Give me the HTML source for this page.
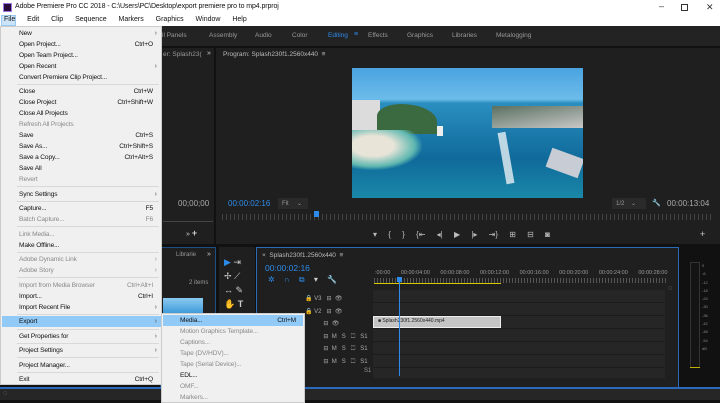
<!DOCTYPE html>
<html><head><meta charset="utf-8"><style>
*{margin:0;padding:0;box-sizing:border-box}
body{width:720px;height:400px;overflow:hidden;background:#111;font-family:"Liberation Sans",sans-serif;position:relative}
.a{position:absolute}
.t{position:absolute;white-space:nowrap;font-size:7px;color:#999}
.m{position:absolute;left:18px;font-size:6.6px;letter-spacing:-0.15px;color:#111;white-space:nowrap;line-height:9px}
.m.g{color:#8a8a8a}
.k{position:absolute;font-size:6.6px;letter-spacing:-0.15px;color:#111;white-space:nowrap;right:8px;line-height:9px}
.k.g{color:#8a8a8a}
.ar{position:absolute;right:4px;font-size:7px;color:#555;line-height:9px}
.sep{position:absolute;left:16px;right:2px;height:1px;background:#d8d8d8}
.blue{color:#2d8ceb}
</style></head><body>
<!-- title bar -->
<div class="a" style="left:0;top:0;width:720px;height:26px;background:#fff"></div>
<div class="a" style="left:3px;top:3px;width:9px;height:9px;background:#2a0a3a;border:1px solid #9a7ae0"></div>
<div class="t" style="left:15px;top:3px;color:#111;font-size:7px;letter-spacing:-0.1px">Adobe Premiere Pro CC 2018 - C:\Users\PC\Desktop\export premiere pro to mp4.prproj</div>
<div class="t" style="left:659px;top:1px;color:#333;font-size:9px">–</div>
<div class="a" style="left:681px;top:4px;width:7px;height:7px;border:1px solid #333"></div>
<div class="t" style="left:706px;top:2px;color:#333;font-size:9px">✕</div>
<div class="a" style="left:1px;top:15px;width:15px;height:11px;background:#cce4f7;border:1px solid #99c9ef"></div>
<div class="t" style="left:4px;top:16px;color:#111;font-size:7px;word-spacing:4px">File&nbsp; Edit&nbsp; Clip&nbsp; Sequence&nbsp; Markers&nbsp; Graphics&nbsp; Window&nbsp; Help</div>
<!-- workspace bar -->
<div class="a" style="left:0;top:26px;width:720px;height:20px;background:#232323"></div>
<div class="t" style="left:162px;top:32px;font-size:6.5px">ll Panels</div>
<div class="t" style="left:209px;top:32px;font-size:6.5px">Assembly</div>
<div class="t" style="left:255px;top:32px;font-size:6.5px">Audio</div>
<div class="t" style="left:292px;top:32px;font-size:6.5px">Color</div>
<div class="t blue" style="left:328px;top:32px;font-size:6.5px">Editing</div>
<div class="t" style="left:354px;top:31px;color:#2d8ceb">≡</div>
<div class="t" style="left:368px;top:32px;font-size:6.5px">Effects</div>
<div class="t" style="left:407px;top:32px;font-size:6.5px">Graphics</div>
<div class="t" style="left:452px;top:32px;font-size:6.5px">Libraries</div>
<div class="t" style="left:496px;top:32px;font-size:6.5px">Metalogging</div>
<!-- source panel -->
<div class="a" style="left:160px;top:48px;width:54px;height:196px;background:#1f1f1f"></div>
<div class="t" style="left:163px;top:51px;font-size:6.5px">er: Splash23(</div>
<div class="t" style="left:207px;top:50px;color:#ccc">»</div>
<div class="t" style="left:178px;top:199px;color:#aaa;font-size:8px">00;00;00</div>
<div class="a" style="left:163px;top:221px;width:50px;height:1px;background:#444"></div>
<div class="t" style="left:186px;top:228px;color:#ccc">» <b style="font-size:9px">+</b></div>
<!-- program panel -->
<div class="a" style="left:216px;top:48px;width:504px;height:196px;background:#1f1f1f"></div>
<div class="t" style="left:223px;top:51px;color:#bbb;font-size:6.5px">Program: Splash230f1.2560x440 &nbsp;≡</div>
<div class="a" style="left:352px;top:68px;width:231px;height:130px;overflow:hidden;background:linear-gradient(180deg,#4aa3e0 0%,#6cbcea 24%,#2a8fc0 27%,#1f7fb0 45%,#0f6a9a 70%,#1a88a8 100%)">
<div class="a" style="left:0;top:32px;width:28px;height:34px;background:#dcdcdc"></div>
<div class="a" style="left:25px;top:36px;width:60px;height:30px;background:#3c6a40;border-radius:40% 60% 0 0"></div>
<div class="a" style="left:0;top:62px;width:70px;height:40px;background:radial-gradient(ellipse at 30% 40%,#e8e4d8 30%,#5fb8b0 60%,transparent 72%)"></div>
<div class="a" style="left:140px;top:38px;width:91px;height:22px;background:linear-gradient(170deg,#5a7060,#c8c8c8)"></div>
<div class="a" style="left:196px;top:85px;width:34px;height:20px;background:#c8ccd4;transform:rotate(20deg)"></div>
<div class="a" style="left:150px;top:64px;width:8px;height:52px;background:#e8f0f4;transform:rotate(-10deg);opacity:.8"></div>
<div class="a" style="left:85px;top:58px;width:6px;height:10px;background:#eee"></div>
</div>
<div class="t blue" style="left:228px;top:199px;font-size:8px">00:00:02:16</div>
<div class="a" style="left:278px;top:198px;width:30px;height:11px;background:#2a2a2a"></div>
<div class="t" style="left:282px;top:200px;font-size:6px">Fit &nbsp; &nbsp; ⌄</div>
<div class="a" style="left:612px;top:198px;width:34px;height:11px;background:#2a2a2a"></div>
<div class="t" style="left:616px;top:200px;font-size:6px">1/2 &nbsp; &nbsp;⌄</div>
<div class="t" style="left:652px;top:199px;color:#ccc">🔧</div>
<div class="t" style="left:667px;top:199px;color:#aaa;font-size:8px">00:00:13:04</div>
<div class="a" style="left:222px;top:214px;width:492px;height:6px;background:repeating-linear-gradient(90deg,#444 0 1px,transparent 1px 4px)"></div>
<div class="a" style="left:314px;top:211px;width:5px;height:6px;background:#2d8ceb"></div>
<div class="t" style="left:373px;top:230px;color:#bbb;font-size:8px;word-spacing:9px">▾ { } {⇤ ◂| ▶ |▸ ⇥} ⊞ ⊟ ◙</div>
<div class="t" style="left:700px;top:229px;color:#ccc;font-size:9px">+</div>
<!-- project panel -->
<div class="a" style="left:160px;top:247px;width:56px;height:140px;background:#1f1f1f;border:1px solid #1f4f80"></div>
<div class="t" style="left:176px;top:252px;font-size:6px">Librarie</div>
<div class="t" style="left:207px;top:251px;color:#ccc">»</div>
<div class="t" style="left:189px;top:280px;font-size:6px">2 items</div>
<div class="a" style="left:163px;top:298px;width:40px;height:16px;background:linear-gradient(#8ccaf0,#3a98d8)"></div>
<!-- tools -->
<div class="a" style="left:219px;top:247px;width:36px;height:140px;background:#1f1f1f"></div>
<div class="t" style="left:224px;top:255px;color:#ccc;font-size:9px;line-height:14px;width:28px;white-space:normal"><span class="blue">▶</span> ⇥<br>✢ ⟋<br>↔ ✎<br>✋ <b>T</b></div>
<!-- timeline -->
<div class="a" style="left:256px;top:247px;width:423px;height:141px;background:#1f1f1f;border:1px solid #2a6ab8"></div>
<div class="t" style="left:262px;top:252px;color:#bbb;font-size:6.5px">× &nbsp;Splash230f1.2560x440 &nbsp;≡</div>
<div class="t blue" style="left:265px;top:263px;font-size:8.5px">00:00:02:16</div>
<div class="t" style="left:268px;top:275px;color:#2d8ceb;font-size:8px;word-spacing:7px">✲ ∩ ⧉ <span style="color:#ccc">▾ 🔧</span></div>
<div class="t" style="left:375px;top:270px;font-size:5.5px;word-spacing:9px">:00:00 00:00:04:00 00:00:08:00 00:00:12:00 00:00:16:00 00:00:20:00 00:00:24:00 00:00:28:00</div>
<div class="a" style="left:374px;top:278px;width:292px;height:5px;background:repeating-linear-gradient(90deg,#555 0 1px,transparent 1px 3px)"></div>
<div class="a" style="left:374px;top:283px;width:127px;height:1px;background:#d8c800"></div>
<div class="a" style="left:373px;top:290px;width:292px;height:88px;background:repeating-linear-gradient(180deg,#262626 0 12px,#1c1c1c 12px 13px)"></div>
<div class="a" style="left:373px;top:316px;width:128px;height:12px;background:#c4c4c4;border:1px solid #eee"></div>
<div class="t" style="left:378px;top:318px;color:#222;font-size:5px">■ Splash230f1.2560x440.mp4</div>
<div class="a" style="left:397px;top:277px;width:5px;height:5px;background:#2d8ceb"></div>
<div class="a" style="left:399px;top:282px;width:1px;height:94px;background:#2d8ceb"></div>
<div class="t" style="left:305px;top:293px;color:#aaa;font-size:6px;line-height:12.5px">🔒 V3 &nbsp; ⊟ &nbsp;👁<br>🔒 V2 &nbsp; ⊟ &nbsp;👁<br>&nbsp; &nbsp; &nbsp; &nbsp; &nbsp; &nbsp;⊟ &nbsp;👁<br>&nbsp; &nbsp; &nbsp; &nbsp; &nbsp; &nbsp;⊟ &nbsp;M &nbsp; S &nbsp; ⏍ &nbsp; S1<br>&nbsp; &nbsp; &nbsp; &nbsp; &nbsp; &nbsp;⊟ &nbsp;M &nbsp; S &nbsp; ⏍ &nbsp; S1<br>&nbsp; &nbsp; &nbsp; &nbsp; &nbsp; &nbsp;⊟ &nbsp;M &nbsp; S &nbsp; ⏍ &nbsp; S1</div>
<div class="t" style="left:364px;top:368px;font-size:6px">S1</div>
<div class="t" style="left:668px;top:285px;font-size:7px;color:#aaa">◌</div>
<!-- audio meter -->
<div class="a" style="left:690px;top:262px;width:10px;height:106px;background:#141414;border:1px solid #333"></div>
<div class="a" style="left:690px;top:367px;width:10px;height:1px;background:#c0b000"></div>
<div class="t" style="left:702px;top:262px;font-size:4px;line-height:8.3px;color:#888;white-space:pre">0
-6
-12
-18
-24
-30
-36
-42
-48
-54
dB</div>
<!-- status bar -->
<div class="a" style="left:0;top:387px;width:720px;height:2px;background:#2a6ab8"></div>
<div class="a" style="left:0;top:389px;width:720px;height:11px;background:#262626"></div>
<div class="t" style="left:3px;top:390px;font-size:7px">◌</div>
<!-- file menu -->
<div class="a" style="left:0;top:26px;width:162px;height:359px;background:#f0f0f0;border:1px solid #ccc">
<div class="m" style="top:2px">New</div><div class="ar" style="top:2px">›</div>
<div class="m" style="top:13px">Open Project...</div><div class="k" style="top:13px">Ctrl+O</div>
<div class="m" style="top:24px">Open Team Project...</div>
<div class="m" style="top:35px">Open Recent</div><div class="ar" style="top:35px">›</div>
<div class="m" style="top:46px">Convert Premiere Clip Project...</div>
<div class="sep" style="top:57px"></div>
<div class="m" style="top:60px">Close</div><div class="k" style="top:60px">Ctrl+W</div>
<div class="m" style="top:71px">Close Project</div><div class="k" style="top:71px">Ctrl+Shift+W</div>
<div class="m" style="top:82px">Close All Projects</div>
<div class="m g" style="top:93px">Refresh All Projects</div>
<div class="m" style="top:104px">Save</div><div class="k" style="top:104px">Ctrl+S</div>
<div class="m" style="top:115px">Save As...</div><div class="k" style="top:115px">Ctrl+Shift+S</div>
<div class="m" style="top:126px">Save a Copy...</div><div class="k" style="top:126px">Ctrl+Alt+S</div>
<div class="m" style="top:137px">Save All</div>
<div class="m g" style="top:148px">Revert</div>
<div class="sep" style="top:159px"></div>
<div class="m" style="top:163px">Sync Settings</div><div class="ar" style="top:163px">›</div>
<div class="sep" style="top:174px"></div>
<div class="m" style="top:177px">Capture...</div><div class="k" style="top:177px">F5</div>
<div class="m g" style="top:188px">Batch Capture...</div><div class="k g" style="top:188px">F6</div>
<div class="sep" style="top:199px"></div>
<div class="m g" style="top:203px">Link Media...</div>
<div class="m" style="top:214px">Make Offline...</div>
<div class="sep" style="top:225px"></div>
<div class="m g" style="top:228px">Adobe Dynamic Link</div><div class="ar" style="top:228px;color:#999">›</div>
<div class="m g" style="top:239px">Adobe Story</div><div class="ar" style="top:239px;color:#999">›</div>
<div class="sep" style="top:250px"></div>
<div class="m g" style="top:254px">Import from Media Browser</div><div class="k g" style="top:254px">Ctrl+Alt+I</div>
<div class="m" style="top:265px">Import...</div><div class="k" style="top:265px">Ctrl+I</div>
<div class="m" style="top:276px">Import Recent File</div><div class="ar" style="top:276px">›</div>
<div class="sep" style="top:287px"></div>
<div class="a" style="left:1px;top:289px;width:159px;height:11px;background:#91c9f7"></div>
<div class="m" style="top:290px">Export</div><div class="ar" style="top:290px">›</div>
<div class="sep" style="top:302px"></div>
<div class="m" style="top:305px">Get Properties for</div><div class="ar" style="top:305px">›</div>
<div class="sep" style="top:316px"></div>
<div class="m" style="top:319px">Project Settings</div><div class="ar" style="top:319px">›</div>
<div class="sep" style="top:330px"></div>
<div class="m" style="top:334px">Project Manager...</div>
<div class="sep" style="top:345px"></div>
<div class="m" style="top:348px">Exit</div><div class="k" style="top:348px">Ctrl+Q</div>
</div>
<!-- export submenu -->
<div class="a" style="left:161px;top:313px;width:144px;height:90px;background:#f0f0f0;border:1px solid #ccc">
<div class="a" style="left:1px;top:1px;width:140px;height:11px;background:#91c9f7"></div>
<div class="m" style="top:2px">Media...</div><div class="k" style="top:2px">Ctrl+M</div>
<div class="m g" style="top:13px">Motion Graphics Template...</div>
<div class="m g" style="top:24px">Captions...</div>
<div class="m g" style="top:35px">Tape (DV/HDV)...</div>
<div class="m g" style="top:46px">Tape (Serial Device)...</div>
<div class="m" style="top:57px">EDL...</div>
<div class="m g" style="top:68px">OMF...</div>
<div class="m g" style="top:79px">Markers...</div>
</div>
</body></html>
